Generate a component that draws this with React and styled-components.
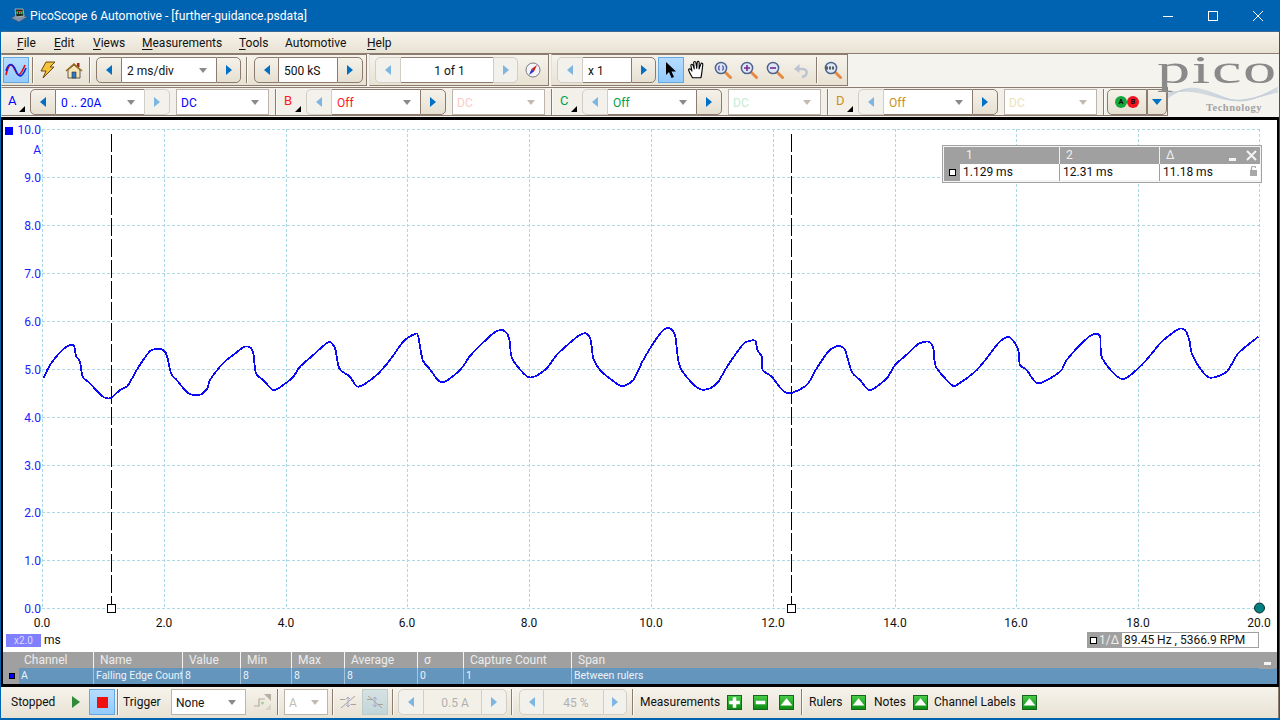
import React from 'react';
import styled, { createGlobalStyle } from 'styled-components';

const UI = 'Roboto, "Liberation Sans", sans-serif';
const BROWN = '#8c7b6f';
const LIGHT = '#d2cec6';
const BAR = 'linear-gradient(#f6f3ec, #e8e2d3)';

const Global = createGlobalStyle`
  html, body { margin: 0; padding: 0; width: 1280px; height: 720px; overflow: hidden; background: #0063b1; }
  * { box-sizing: border-box; }
  body { font: 12px ${UI}; color: #111; }
`;

const Win = styled.div`
  width: 1280px; height: 720px; display: flex; flex-direction: column; padding: 0 1px 2px; background: #0063b1;
`;
const TitleBar = styled.div`
  height: 31px; margin: 0 -1px; display: flex; align-items: center; padding-left: 10px; color: #fff; flex: none;
`;
const TitleText = styled.span`
  margin-left: 2px; font-size: 12.1px; white-space: nowrap; flex: 1;
`;
const WinBtn = styled.div`
  width: 45px; height: 31px; display: flex; align-items: center; justify-content: center; flex: none;
`;
const Menu = styled.div`
  height: 23px; flex: none; margin-top: 0; border-top: 1px solid #3a6a96; border-bottom: 1px solid ${BROWN};
  background: ${BAR}; display: grid; align-items: center; padding: 1px 0 0 16px;
  grid-template-columns: 37px 39px 49px 97px 46px 82px 1fr;
`;
const MenuItem = styled.span`
  font-size: 12px; white-space: nowrap;
  u { text-decoration: underline; text-underline-offset: 2px; }
`;
const Tools = styled.div`
  position: relative; background: #f5f3ee; height: 63px; flex: none;
`;
const Row = styled.div`
  display: flex; height: ${p => p.$h}px; margin-bottom: 1px; gap: 2px;
`;
const Panel = styled.div`
  width: ${p => p.$w}px; height: 100%; display: flex; align-items: center; flex: none;
  padding-left: ${p => p.$pl || 0}px; background: ${BAR};
  border: 1px solid ${BROWN}; border-left-color: #e4dfd5;
`;
const Panel2 = styled(Panel)`
  align-items: flex-start; padding-top: 1px; background: #f3f0e9;
  border-bottom-color: ${BROWN};
`;
const Sep = styled.div`
  width: 1px; height: 26px; flex: none; background: ${BROWN}; margin-left: ${p => p.$ml || 0}px;
  box-shadow: 1px 0 0 #fbfaf6;
`;
const IconBtn = styled.div`
  width: ${p => p.$w || 26}px; height: 26px; flex: none; display: flex; align-items: center; justify-content: center;
  margin-left: ${p => p.$ml || 0}px; border: 1px solid transparent;
  ${p => p.$on && `background: linear-gradient(#b6dcff, #94cafc); border-color: #62a9e6;`}
  ${p => p.$ghost && `background: linear-gradient(#d6e2e2, #c3d5d8); border-color: #b8cccc;`}
`;
const Group = styled.div`
  display: flex; height: 26px; flex: none; margin-left: ${p => p.$ml || 0}px;
`;
const Step = styled.div`
  width: ${p => p.$w || 26}px; height: 26px; flex: none; display: flex; align-items: center; justify-content: center;
  background: ${p => p.$dis ? '#f3f1eb' : 'linear-gradient(#f5f2ea, #e6e0d1)'};
  border: 1px solid ${p => p.$dis ? LIGHT : BROWN};
  ${p => p.$side === 'l'
    ? 'border-radius: 5px 0 0 5px; border-right-width: 1px;'
    : 'border-radius: 0 5px 5px 0; border-left-width: 1px;'}
`;
const Arrow = styled.i`
  width: 0; height: 0; display: block; border-style: solid; border-width: 5px 0 5px 6px;
  border-color: transparent transparent transparent ${p => p.$dis ? '#7db6e2' : '#0070c4'};
  ${p => p.$left && 'transform: scaleX(-1);'}
`;
const Field = styled.div`
  width: ${p => p.$w}px; height: 26px; flex: none; position: relative; display: flex; align-items: center;
  background: ${p => p.$dis ? '#f3f0e8' : '#fff'}; padding: 1px 0 0 ${p => p.$pl ?? 5}px;
  border-top: 1px solid ${p => p.$dis ? LIGHT : BROWN}; border-bottom: 1px solid ${p => p.$dis ? LIGHT : BROWN};
  color: ${p => p.$c || '#111'}; font-size: 12px; white-space: nowrap;
  justify-content: ${p => p.$center ? 'center' : 'flex-start'};
`;
const Caret = styled.i`
  position: absolute; right: ${p => p.$r || 9}px; top: 10px; width: 0; height: 0; border-style: solid;
  border-width: 5px 4.5px 0 4.5px; border-color: ${p => p.$dis ? '#c2bbb2' : '#8a8a8a'} transparent transparent transparent;
`;
const Select = styled.div`
  width: ${p => p.$w}px; height: 26px; flex: none; position: relative; display: flex; align-items: center;
  margin-left: ${p => p.$ml || 0}px; padding: 1px 0 0 4px; background: #fff; border: 1px solid #bdb5ab;
  color: ${p => p.$c || '#111'}; font-size: 12px;
`;
const ChanLabel = styled.div`
  width: 30px; height: 26px; flex: none; position: relative; padding: 4px 0 0 8px; font-size: 13px; color: ${p => p.$c};
  margin-left: ${p => p.$ml || 0}px;
  &::after {
    content: ''; position: absolute; left: 19px; bottom: 3px; width: 0; height: 0; border-style: solid;
    border-width: 0 0 6px 6px; border-color: transparent transparent #000 transparent;
  }
`;
const SplitBtn = styled.div`
  width: ${p => p.$w}px; height: 26px; flex: none; display: flex; align-items: center; justify-content: center;
  background: linear-gradient(#f5f2ea, #e6e0d1); border: 1px solid ${BROWN};
  border-radius: ${p => p.$r};
  margin-left: ${p => p.$ml || 0}px;
`;
const Dot = styled.span`
  width: 12px; height: 12px; border-radius: 50%; background: ${p => p.$c}; color: #111; font-size: 7.5px; font-weight: 700;
  display: flex; align-items: center; justify-content: center; line-height: 1;
`;
const CaretBlue = styled.i`
  width: 0; height: 0; border-style: solid; border-width: 6px 5px 0 5px;
  border-color: #0070c4 transparent transparent transparent;
`;

const Logo = styled.div`
  position: absolute; left: 1158px; top: 0; width: 122px; height: 63px; color: #8a8a8a;
`;
const LogoWord = styled.span`
  position: absolute; left: -2px; top: -7px; font: 39px "Liberation Serif", serif; transform-origin: 0 0;
  transform: scaleX(1.7); letter-spacing: 1px; white-space: nowrap; line-height: 1.2;
`;
const LogoTech = styled.span`
  position: absolute; left: 47px; top: 48px; font: 700 10.5px "Liberation Serif", serif; color: #a2a2a2; letter-spacing: 0.5px;
`;
const LogoWave = styled.svg`
  position: absolute; left: 9px; top: 32px;
`;

const Frame = styled.div`
  flex: 1; min-height: 0; display: flex; flex-direction: column; background: #fff;
  border: solid #000; border-width: 3px 2px 3px 2px;
`;
const Plot = styled.div`
  position: relative; height: 532px; flex: none; background: #fff;
`;
const PlotSvg = styled.svg`
  display: block; font-family: ${UI}; font-size: 12px;
`;
const RulerBox = styled.div`
  position: absolute; left: 939px; top: 25px; width: 320px; height: 38px; border: 1px solid #a2a2a2; padding: 1px;
  background: #f4f4f4;
`;
const RulerHead = styled.div`
  position: relative; height: 17px; background: #a0a0a0; display: grid; grid-template-columns: 16px 99px 100px 1fr;
  color: #f0f0f0; font-size: 12px; line-height: 17px;
`;
const RulerHeadCell = styled.div`
  padding-left: 6px; border-left: ${p => p.$first ? '0' : '1px solid #f0f0f0'};
`;
const RulerRow = styled.div`
  position: relative; height: 16px; background: #fff; display: grid; grid-template-columns: 16px 99px 100px 1fr;
  font-size: 12px; line-height: 17px;
`;
const RulerCell = styled.div`
  padding-left: 3px; border-left: ${p => p.$first ? '0' : '1px solid #a0a0a0'}; white-space: nowrap;
`;
const RulerMark = styled.div`
  background: #a0a0a0; display: flex; align-items: center; justify-content: center;
`;
const SmallSq = styled.i`
  width: 7px; height: 7px; display: block; background: #fff; border: 1px solid #000;
`;
const RulerMin = styled.i`
  position: absolute; right: 24px; top: 11px; width: 7px; height: 3px; background: #f4f4f4;
`;
const RulerClose = styled.svg`
  position: absolute; right: 3px; top: 3px;
`;
const RulerLock = styled.svg`
  position: absolute; right: 3px; top: 2px;
`;
const Zoom = styled.div`
  position: absolute; left: 3px; top: 514px; width: 35px; height: 13px; background: #8080ff; color: #dcdcff;
  font-size: 10px; line-height: 13px; text-align: center;
`;
const ZoomUnit = styled.span`
  position: absolute; left: 41px; top: 513px; font-size: 12px;
`;
const Freq = styled.div`
  position: absolute; left: 1084px; top: 512px; width: 172px; height: 16px; display: flex; background: #a0a0a0;
  border: 1px solid #a0a0a0;
`;
const FreqTag = styled.div`
  width: 34px; flex: none; display: flex; align-items: center; gap: 2px; padding-left: 2px; color: #ececec; font-size: 12px;
`;
const FreqVal = styled.div`
  flex: 1; background: #fff; padding-left: 2px; font-size: 12px; line-height: 15px; white-space: nowrap;
`;

const cols = '16px 74px 89px 58px 51px 53px 73px 46px 108px 1fr';
const Table = styled.div`
  flex: 1; position: relative; display: flex; flex-direction: column; background: #a0a0a0;
`;
const THead = styled.div`
  height: 16px; display: grid; grid-template-columns: ${cols}; color: #ececec; font-size: 12px; line-height: 17px;
`;
const TRow = styled.div`
  height: 16px; display: grid; grid-template-columns: ${cols}; color: #edf2f7; font-size: 10.5px; line-height: 16px;
`;
const Th = styled.div`
  padding-left: ${p => p.$pl || 6}px; border-left: ${p => p.$first ? '0' : '1px solid #f4f4f4'}; white-space: nowrap;
`;
const Td = styled.div`
  background: #6495bd; padding-left: 2px; border-left: ${p => p.$first ? '0' : '1px solid #a8c4d9'}; white-space: nowrap;
`;
const Mark = styled.div`
  display: flex; align-items: center; justify-content: center; padding-left: 1px;
`;
const BlueSq = styled.i`
  width: 6px; height: 6px; display: block; background: #0000ff; border: 1px solid #000;
`;
const TMin = styled.div`
  position: absolute; right: 2px; top: 10px; width: 16px; height: 7px; background: #a0a0a0; display: flex; justify-content: center; align-items: flex-start;
  &::after { content: ''; width: 7px; height: 3px; background: #f4f4f4; }
`;

const Bottom = styled.div`
  height: 31px; flex: none; display: flex; align-items: center; padding: 2px 0 3px; background: ${BAR};
  border-right: 1px solid ${BROWN};
`;
const BotLabel = styled.span`
  width: ${p => p.$w}px; flex: none; margin-left: ${p => p.$ml || 0}px; padding-left: ${p => p.$pl || 0}px; font-size: 12px; white-space: nowrap;
`;
const GreenBtn = styled.div`
  width: 15px; height: 15px; flex: none; margin-left: ${p => p.$ml || 0}px; border: 1px solid #14661c; background: linear-gradient(#46cc46, #0c8a14);
  display: flex; align-items: center; justify-content: center;
`;

const LightText = styled.span`
  color: #b0b0b0;
`;

/* ---------- drawings ---------- */
const AppIcon = () => (
  <svg width="18" height="16" viewBox="0 0 18 16"><path d="M1 10 L9 6 L17 9 L9 14 Z" fill="#7f93ad" stroke="#44566e" strokeWidth=".7" /><path d="M5 1 L13 1 L14 8 L6 9 Z" fill="#1e2a22" stroke="#c8c8c8" strokeWidth=".8" /><path d="M6.5 3h1.5v3H6.5zM9 3h1.5v3H9zM11 3h1.5v3H11z" fill="#3fbf52" /><path d="M7 3.5h5" stroke="#d33" strokeWidth=".8" /></svg>
);
const WaveIcon = () => (
  <svg width="22" height="16" viewBox="0 0 22 16" fill="none" strokeWidth="1.6"><path d="M1 13 C4 0 7 1 10 8 S15 15 20 3" stroke="#e01010" /><path d="M1 9 C4 -1 8 2 11 9 S17 16 21 6" stroke="#1020e0" /></svg>
);
const BoltIcon = () => (
  <svg width="17" height="18" viewBox="0 0 17 18"><path d="M7 1 L16 1 L11 6 L15 6 L4 17 L7 10 L2 10 Z" fill="#f5c23a" stroke="#6a4a10" strokeWidth="1" /></svg>
);
const HomeIcon = () => (
  <svg width="18" height="17" viewBox="0 0 18 17"><path d="M12 1h2.500v4H12z" fill="#a02a1a" /><path d="M3 8v8h12V8L9 3z" fill="#f6e6b4" stroke="#3a3a3a" strokeWidth=".8" /><path d="M1 9 L9 2 L17 9" fill="none" stroke="#9a6a1e" strokeWidth="1.6" /><path d="M7 10h4v6H7z" fill="#2b78c8" stroke="#333" strokeWidth=".6" /></svg>
);
const CompassIcon = () => (
  <svg width="16" height="16" viewBox="0 0 16 16"><circle cx="8" cy="8" r="7" fill="#f4f4fa" stroke="#7a7a82" /><path d="M12 3 L6.500 7 L9 9.500 Z" fill="#d01818" /><path d="M4 13 L6.500 7 L9 9.500 Z" fill="#2838c8" /></svg>
);
const CursorIcon = () => (
  <svg width="12" height="18" viewBox="0 0 12 18"><path d="M1 1 L1 14 L4 11 L6.500 17 L9 16 L6.500 10.500 L11 10.500 Z" fill="#000" /></svg>
);
const HandIcon = () => (
  <svg width="20" height="20" viewBox="0 0 18 18"><path d="M5 16 C4 14 1 10 1.500 8.500 C2 7.500 3.500 8 4.500 10 L3.500 5 C3.500 3.500 5 3.500 5.500 5 L6.500 8 L6 2.500 C6 1 7.800 1 8 2.500 L8.800 7.500 L9.200 2 C9.400 .8 11 1 11 2.500 L10.900 8 L12.500 3.500 C13 2.300 14.500 2.800 14.200 4.200 L13.500 10 C13.300 12 13 14 12.500 16 Z" fill="#fff" stroke="#000" strokeWidth="1" strokeLinejoin="round" /></svg>
);
const Lens = ({ kind }) => (
  <svg width="18" height="18" viewBox="0 0 18 18">
    <path d="M11 11 L16.500 16.500" stroke="#e58a45" strokeWidth="3" strokeLinecap="round" />
    <circle cx="7" cy="7" r="5.600" fill="#dbe6f7" stroke="#4f6288" strokeWidth="1.500" />
    {kind === 'fit' && <path d="M5.500 4.500 Q3.800 7 5.500 9.500 M8.500 4.500 Q10.200 7 8.500 9.500" fill="none" stroke="#5a4aa8" strokeWidth="1.200" />}
    {kind === 'plus' && <path d="M4 7h6M7 4v6" stroke="#7a2a90" strokeWidth="1.600" />}
    {kind === 'minus' && <path d="M4 7h6" stroke="#7a2a90" strokeWidth="1.600" />}
    {kind === 'full' && <path d="M3 5.500v3M6 5.500v3M9 5.500v3" stroke="#222" strokeWidth="1.400" />}
  </svg>
);
const UndoIcon = () => (
  <svg width="17" height="17" viewBox="0 0 17 17" fill="none"><path d="M4.500 7 H10 C15 7 15 14 9 15" stroke="#bcc4d2" strokeWidth="2.400" /><path d="M6.500 2 L1 7 L6.500 11 Z" fill="#bcc4d2" /></svg>
);
const TriggerIcon = () => (
  <svg width="19" height="18" viewBox="0 0 19 18" fill="none"><path d="M1 13 H6 V6 H12" stroke="#b3aa9e" strokeWidth="1.200" /><path d="M11 1 H18 V8 Z" fill="#b8b0a4" /><path d="M12 17 H18 V11 Z" fill="#d8d4cc" /><circle cx="9.500" cy="10" r="1.500" fill="#9fd69f" /></svg>
);
const EdgeIcon = ({ fall }) => (
  <svg width="18" height="16" viewBox="0 0 18 16" fill="none"><path d={fall ? 'M2 2 L16 14' : 'M2 14 L16 2'} stroke="#a9a49a" strokeWidth="1" /><path d="M1 5.500h5M12 10.500h5" stroke="#a9a49a" /><path d="M9 3v10M6.800 5.500 L9 3 L11.200 5.500M6.800 10.500 L9 13 L11.200 10.500" stroke="#a7abd0" strokeWidth="1" /></svg>
);
const Glyph = ({ t }) => (
  <svg width="13" height="13" viewBox="0 0 11 11">
    {t === 'plus' && <path d="M4 1h3v3h3v3H7v3H4V7H1V4h3z" fill="#fff" />}
    {t === 'minus' && <path d="M1.500 4h8v3h-8z" fill="#fff" />}
    {t === 'up' && <path d="M5.500 2 L10.500 8 H.5 Z" fill="#fff" />}
  </svg>
);

/* ---------- data ---------- */
const tracePts = '43.3,378.3 50,365 60,352.3 68.3,345.7 74,345.7 76,356 80,361.7 82.7,376.7 90,383.3 96.7,390.7 104,397.3 110.7,398 120,390 127.7,385.7 136.7,370 146.7,355 151.7,350 161.7,349.3 166.7,355 171,373.3 176.7,380 188.3,393.3 200,394.7 207.3,388.3 210,380 220,366.7 226.7,360 233.3,355 243.3,347.3 250,347.3 253.3,353.3 256,373.3 263.3,380 273.3,390 283.3,385 293.3,376.7 300,366.7 313.3,355 328.3,342.3 335,348.3 339.3,368.3 350,376.7 358.3,386.7 376.7,375 390,360 403.3,341.7 415,334 418.3,336.7 422.7,360 430,369.3 441.7,382.3 460,370 470,356 481.7,344 493.3,333.3 501.7,330 507.3,334 510,343.3 511,355 515,363.3 529,377.3 545,370 556.7,355 570,342.7 580,335 586,333.3 590.7,340 593.3,358.3 600,370 611.7,380 620,385.7 625,385.7 633.3,380 643.3,360 653.3,343.3 663.3,330 669.3,328.3 675,335 677.3,353.3 679.3,365 685,375 698.3,388.3 708.3,389 718.3,381.7 725,370 736.7,352.7 745,342.7 755,340.7 757.3,350 761.7,356.7 762.7,370 771.7,376.7 781.7,389.3 790,393.3 806.7,385 816.7,368.3 828.3,351.7 838.3,346 845,350 851.7,371.7 860,380 870,390 886.7,378.3 895,365 908.3,353.3 918.3,344 928.3,341.7 933.3,348.3 936,366.7 951.7,385 956.7,385 975,371.7 986.7,358.3 998.3,343.3 1008.3,336.7 1015,343.3 1018.3,350 1020,365 1026.7,370 1038.3,383.3 1060,371.7 1066.7,360 1080,345 1091.7,335 1100,336 1102.3,358.3 1121.7,379 1140,366.7 1153.3,351.7 1161.7,341.7 1178.3,329.3 1185,330 1189.3,340 1191.7,353.3 1200,368.3 1210,377.7 1226.7,371.7 1238.3,353.3 1258.3,336.7'
  .split(' ').map(s => s.split(',').map(Number));
/* Catmull-Rom through the sampled points, so the trace is curved like the real signal */
const tracePath = tracePts.reduce((d, p, i, a) => {
  if (i === 0) return `M${p[0]} ${p[1]}`;
  const p0 = a[i - 2] || a[i - 1], p1 = a[i - 1], p3 = a[i + 1] || p;
  const c1 = [p1[0] + (p[0] - p0[0]) / 7, p1[1] + (p[1] - p0[1]) / 7];
  const c2 = [p[0] - (p3[0] - p1[0]) / 7, p[1] - (p3[1] - p1[1]) / 7];
  return `${d} C${c1[0].toFixed(1)} ${c1[1].toFixed(1)} ${c2[0].toFixed(1)} ${c2[1].toFixed(1)} ${p[0]} ${p[1]}`;
}, '');
const gridX = [42, 164, 286, 407, 529, 651, 773, 895, 1016, 1138, 1259];
const gridY = [129, 177, 225, 273, 321, 369, 417, 465, 512, 560, 608];
const headers = ['Channel', 'Name', 'Value', 'Min', 'Max', 'Average', 'σ', 'Capture Count', 'Span'];
const cells = ['A', 'Falling Edge Count', '8', '8', '8', '8', '0', '1', 'Between rulers'];

const Chart = () => (
  <PlotSvg width="1274" height="532" viewBox="3 120 1274 532">
    {gridX.map(x => <line key={x} x1={x + .5} x2={x + .5} y1="129" y2="608" stroke="#add8e6" strokeDasharray="3 2" shapeRendering="crispEdges" />)}
    {gridY.map(y => <line key={y} x1="42" x2="1260" y1={y + .5} y2={y + .5} stroke="#add8e6" strokeDasharray="3 2" shapeRendering="crispEdges" />)}
    {gridY.map((y, i) => <text key={y} x="41" y={y + 5} textAnchor="end" fill="#1c1cff">{(10 - i).toFixed(1)}</text>)}
    <text x="41" y="154" textAnchor="end" fill="#1c1cff">A</text>
    <rect x="5" y="127" width="8" height="8" fill="#0000ff" />
    {gridX.map((x, i) => <text key={x} x={x} y="627" textAnchor="middle" fill="#111">{(i * 2).toFixed(1)}</text>)}
    <path d={tracePath} fill="none" stroke="#0a0af5" strokeWidth="1.8" shapeRendering="crispEdges" />
    {[111, 791].map(x => (
      <g key={x}>
        <line x1={x + .5} x2={x + .5} y1="134" y2="604" stroke="#000" strokeDasharray="18 3" shapeRendering="crispEdges" />
        <rect x={x - 3.5} y="604.5" width="8" height="8" fill="#fff" stroke="#000" shapeRendering="crispEdges" />
      </g>
    ))}
    <circle cx="1259.500" cy="608" r="5" fill="#008080" stroke="#0b2b2b" />
  </PlotSvg>
);

const Stepper = ({ lw = 26, rw = 25, fw, text, caret, ldis, rdis, color, allDis, center }) => (
  <>
    <Step $side="l" $w={lw} $dis={ldis}><Arrow $left $dis={ldis} /></Step>
    <Field $w={fw} $c={color} $dis={allDis} $center={center}>{text}{caret && <Caret />}</Field>
    <Step $side="r" $w={rw} $dis={rdis}><Arrow $dis={rdis} /></Step>
  </>
);

const Channel = ({ name, c, range, ldis, rdis, dc, dcColor, first }) => (
  <>
    <ChanLabel $c={c} $ml={first ? -2 : 0}>{name}</ChanLabel>
    <Group><Stepper lw={26} rw={26} fw={88} text={range} caret ldis={ldis} rdis={rdis} color={c} /></Group>
    <Select $w={93} $ml={6} $c={dcColor}>{dc}<Caret $dis={dcColor !== c} /></Select>
    <Sep $ml={6} />
  </>
);

export default function App() {
  return (
    <Win>
      <Global />
      <TitleBar>
        <AppIcon />
        <TitleText>PicoScope 6 Automotive - [further-guidance.psdata]</TitleText>
        <WinBtn><svg width="10" height="10"><path d="M0 5.500h10" stroke="#fff" /></svg></WinBtn>
        <WinBtn><svg width="10" height="10"><rect x=".5" y=".5" width="9" height="9" fill="none" stroke="#fff" /></svg></WinBtn>
        <WinBtn><svg width="10" height="10"><path d="M0 0 L10 10 M10 0 L0 10" stroke="#fff" /></svg></WinBtn>
      </TitleBar>
      <Menu>
        <MenuItem><u>F</u>ile</MenuItem>
        <MenuItem><u>E</u>dit</MenuItem>
        <MenuItem><u>V</u>iews</MenuItem>
        <MenuItem><u>M</u>easurements</MenuItem>
        <MenuItem><u>T</u>ools</MenuItem>
        <MenuItem>Automotive</MenuItem>
        <MenuItem><u>H</u>elp</MenuItem>
      </Menu>
      <Tools>
        <Row $h={32}>
          <Panel $w={366} $pl={1}>
            <IconBtn $on><WaveIcon /></IconBtn>
            <Sep $ml={3} />
            <IconBtn $ml={1}><BoltIcon /></IconBtn>
            <IconBtn $ml={1}><HomeIcon /></IconBtn>
            <Sep $ml={2} />
            <Group $ml={6}><Stepper fw={94} text="2 ms/div" caret /></Group>
            <Sep $ml={5} />
            <Group $ml={7}><Stepper lw={25} rw={26} fw={58} text="500 kS" /></Group>
          </Panel>
          <Panel $w={180} $pl={5}>
            <Group><Stepper fw={92} text="1 of 1" ldis rdis center /></Group>
            <IconBtn $ml={2}><CompassIcon /></IconBtn>
          </Panel>
          <Panel $w={297} $pl={5}>
            <Group><Stepper fw={48} text="x 1" ldis /></Group>
            <IconBtn $ml={2} $on><CursorIcon /></IconBtn>
            <IconBtn><HandIcon /></IconBtn>
            <IconBtn><Lens kind="fit" /></IconBtn>
            <IconBtn><Lens kind="plus" /></IconBtn>
            <IconBtn><Lens kind="minus" /></IconBtn>
            <IconBtn><UndoIcon /></IconBtn>
            <Sep $ml={2} />
            <IconBtn $ml={3}><Lens kind="full" /></IconBtn>
          </Panel>
        </Row>
        <Row $h={29}>
          <Panel2 $w={1167}>
            <Channel first name="A" c="#0000ff" range="0 .. 20A" rdis dc="DC" dcColor="#0000ff" />
            <Channel name="B" c="#ff1a1a" range="Off" ldis dc="DC" dcColor="#fbcaca" />
            <Channel name="C" c="#00a050" range="Off" ldis dc="DC" dcColor="#c2ebd4" />
            <Channel name="D" c="#c8921a" range="Off" ldis dc="DC" dcColor="#ece2bd" />
            <SplitBtn $w={40} $ml={3} $r="5px 0 0 5px"><Dot $c="#16a83c">A</Dot><Dot $c="#f0141e">B</Dot></SplitBtn>
            <SplitBtn $w={20} $r="0 5px 5px 0"><CaretBlue /></SplitBtn>
          </Panel2>
        </Row>
        <Logo>
          <LogoWord>pico</LogoWord>
          <LogoWave width="110" height="18" viewBox="0 0 110 18" fill="none" stroke="#c3cfda" strokeWidth=".7">
            {[0, 1, 2, 3, 4, 5].map(i => (
              <path key={i} d={`M0 ${12 - i} C18 ${-2 + i} 30 ${1 + i} 50 ${9 + i / 2} S78 ${19 - i} 110 ${1 + i}`} />
            ))}
          </LogoWave>
          <LogoTech>Technology</LogoTech>
        </Logo>
      </Tools>
      <Frame>
        <Plot>
          <Chart />
          <RulerBox>
            <RulerHead>
              <RulerHeadCell $first />
              <RulerHeadCell $first>1</RulerHeadCell>
              <RulerHeadCell>2</RulerHeadCell>
              <RulerHeadCell>Δ</RulerHeadCell>
              <RulerMin />
              <RulerClose width="11" height="11" viewBox="0 0 11 11"><path d="M1 1 L10 10 M10 1 L1 10" stroke="#f4f4f4" strokeWidth="2" /></RulerClose>
            </RulerHead>
            <RulerRow>
              <RulerMark><SmallSq /></RulerMark>
              <RulerCell $first>1.129 ms</RulerCell>
              <RulerCell>12.31 ms</RulerCell>
              <RulerCell>11.18 ms</RulerCell>
              <RulerLock width="7" height="10" viewBox="0 0 7 10"><path d="M0 4h7v6H0z" fill="#a8a8a8" /><path d="M1.500 4V2 a2 2 0 0 1 4 0" fill="none" stroke="#a8a8a8" strokeWidth="1.300" /></RulerLock>
            </RulerRow>
          </RulerBox>
          <Zoom>x2.0</Zoom>
          <ZoomUnit>ms</ZoomUnit>
          <Freq>
            <FreqTag><SmallSq />1/Δ</FreqTag>
            <FreqVal>89.45 Hz , 5366.9 RPM</FreqVal>
          </Freq>
        </Plot>
        <Table>
          <THead>
            <Th $first />
            {headers.map((h, i) => <Th key={h} $first={i === 0} $pl={i === 0 ? 5 : 6}>{h}</Th>)}
          </THead>
          <TRow>
            <Mark><BlueSq /></Mark>
            {cells.map((c, i) => <Td key={i} $first={i === 0}>{c}</Td>)}
            <Td $first />
          </TRow>
          <TMin />
        </Table>
      </Frame>
      <Bottom>
        <BotLabel $w={62} $pl={10}>Stopped</BotLabel>
        <IconBtn><svg width="8" height="12"><path d="M0 0 L8 6 L0 12 Z" fill="#2f8a3a" /></svg></IconBtn>
        <IconBtn $on><svg width="11" height="11"><rect width="11" height="11" fill="#f01010" /></svg></IconBtn>
        <Sep $ml={2} />
        <BotLabel $w={48} $ml={5}>Trigger</BotLabel>
        <Select $w={75}>None<Caret /></Select>
        <IconBtn $ml={3}><TriggerIcon /></IconBtn>
        <Sep $ml={2} />
        <Select $w={44} $ml={6} $c="#c2bcb2">A<Caret $dis $r={8} /></Select>
        <Sep $ml={4} />
        <IconBtn $ml={2}><EdgeIcon /></IconBtn>
        <IconBtn $ml={1} $ghost><EdgeIcon fall /></IconBtn>
        <Sep $ml={4} />
        <Group $ml={5}><Stepper lw={26} rw={26} fw={57} text={<LightText>0.5 A</LightText>} ldis rdis allDis center /></Group>
        <Sep $ml={4} />
        <Group $ml={7}><Stepper lw={25} rw={24} fw={59} text={<LightText>45 %</LightText>} ldis rdis allDis center /></Group>
        <Sep $ml={5} />
        <BotLabel $w={87} $ml={7}>Measurements</BotLabel>
        <GreenBtn><Glyph t="plus" /></GreenBtn>
        <GreenBtn $ml={11}><Glyph t="minus" /></GreenBtn>
        <GreenBtn $ml={11}><Glyph t="up" /></GreenBtn>
        <Sep $ml={7} />
        <BotLabel $w={42} $ml={7}>Rulers</BotLabel>
        <GreenBtn><Glyph t="up" /></GreenBtn>
        <BotLabel $w={39} $ml={8}>Notes</BotLabel>
        <GreenBtn><Glyph t="up" /></GreenBtn>
        <BotLabel $w={88} $ml={6}>Channel Labels</BotLabel>
        <GreenBtn><Glyph t="up" /></GreenBtn>
      </Bottom>
    </Win>
  );
}
